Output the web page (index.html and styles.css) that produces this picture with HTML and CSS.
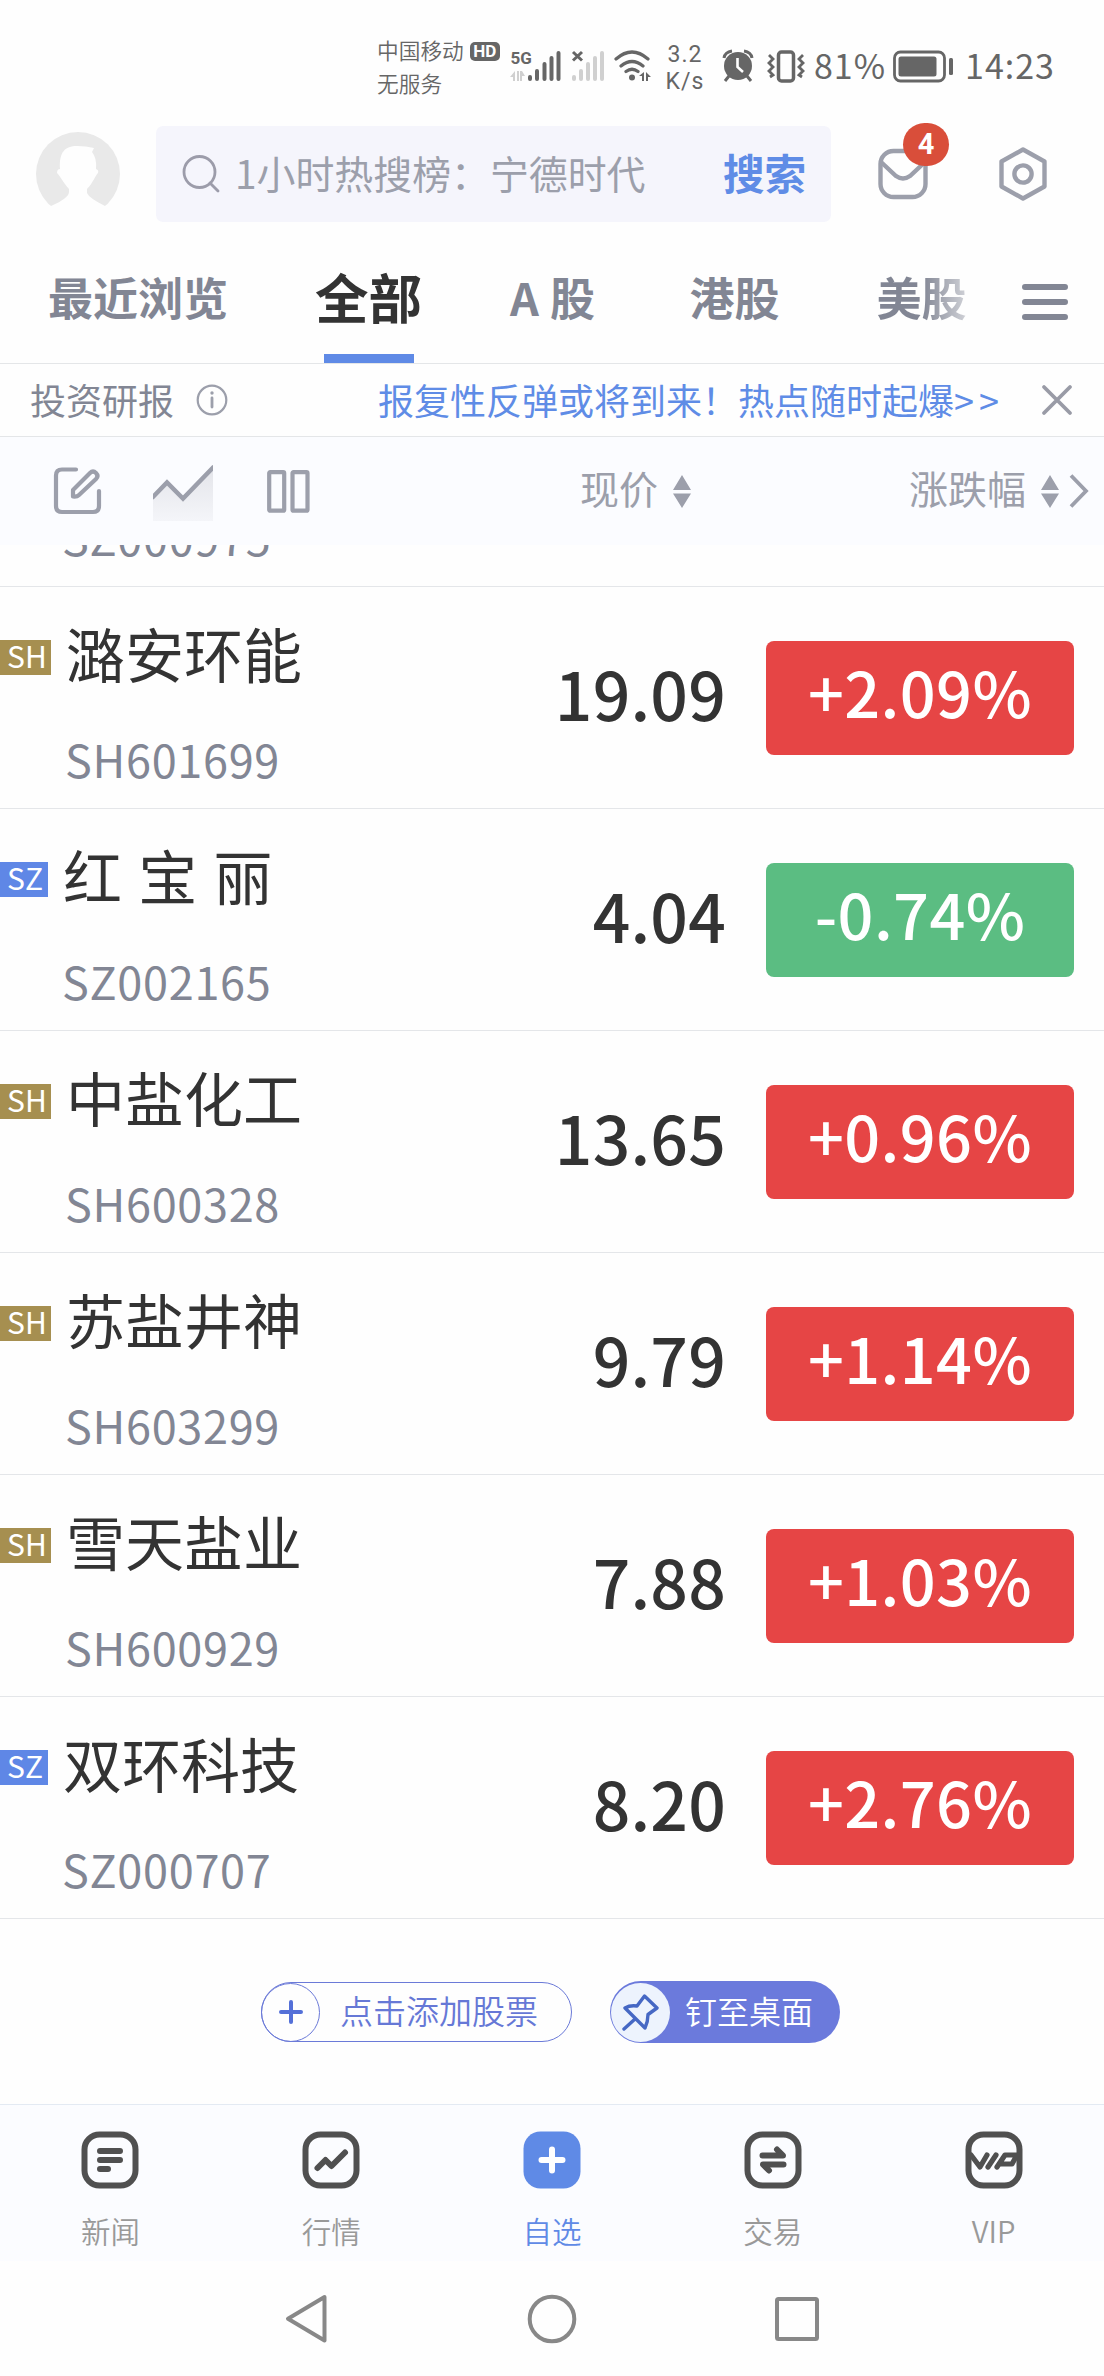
FILE: index.html
```html
<!DOCTYPE html>
<html lang="zh-CN">
<head>
<meta charset="utf-8">
<title>自选</title>
<link rel="stylesheet" href="styles.css">
</head>
<body>
<div class="app">
  <div class="status">
    <div class="carrier"><div class="carrier-line"><span>中国移动</span><span class="hd">HD</span></div><div>无服务</div></div>
    <svg class="signal" width="96" height="34" viewBox="510 49 96 34">
      <text x="510.500" y="64" class="net">5G</text>
      <path d="M515 71v10h-2v-4h-3zM517 71h2v10h-2zM520 71h2l3 5h-3v5h-2z" fill="#d0d0d0"/>
      <g stroke="#666" stroke-width="4" stroke-linecap="round"><path d="M530 77v2M537 71v8M544.500 64v15M551.500 58v21M558.500 53v26"/></g>
      <g stroke="#d0d0d0" stroke-width="4" stroke-linecap="round"><path d="M574 77v2M581 71v8M588 64v15M595 58v21M602 53v26"/></g>
      <path d="M573 52l9 8.500M582 52l-9 8.500" stroke="#666" stroke-width="3"/>
    </svg>
    <svg class="wifi" width="38" height="34" viewBox="614 49 38 34">
      <g fill="none" stroke="#666" stroke-width="3.200" stroke-linecap="round"><path d="M616 59q16-14 32 0M621 66q11-9 22 0M626 71.500q6-4.500 12 0"/></g>
      <circle cx="632" cy="77.500" r="3" fill="#666"/>
      <path d="M639 76l5-4v9h-2v-5zM646 81v-9l5 5h-3v4z" fill="#666"/>
    </svg>
    <div class="speed"><span>3.2</span><span>K/s</span></div>
    <svg class="alarm" width="32" height="34" viewBox="722 49 32 34">
      <circle cx="738" cy="66" r="14" fill="#666"/>
      <path d="M724 58q1-6 8-7M752 58q-1-6-8-7" fill="none" stroke="#666" stroke-width="3"/>
      <path d="M729 76l-4 5M747 76l4 5" stroke="#666" stroke-width="3"/>
      <path d="M737.500 58v9l5.500 5" fill="none" stroke="#fff" stroke-width="2.600"/>
    </svg>
    <svg class="vibrate" width="40" height="34" viewBox="765 49 40 34">
      <rect x="777.500" y="52" width="15" height="29" rx="3" fill="none" stroke="#666" stroke-width="3.500"/>
      <path d="M768 55l4 4-4 4 4 4-4 4 4 4-3 2M802 55l-4 4 4 4-4 4 4 4-4 4 3 2" fill="none" stroke="#666" stroke-width="2.800"/>
    </svg>
    <span class="stat-num">81%</span>
    <svg class="battery" width="62" height="34" viewBox="890 49 62 34">
      <rect x="892.500" y="52" width="50" height="29" rx="6" fill="none" stroke="#666" stroke-width="2.800"/>
      <rect x="896.500" y="56.500" width="38" height="20" rx="2.500" fill="#666"/>
      <rect x="947" y="58" width="4" height="17" rx="1.500" fill="#666"/>
    </svg>
    <span class="stat-num">14:23</span>
  </div>

  <header class="top">
    <svg class="avatar" width="84" height="84" viewBox="0 0 84 84">
      <circle cx="42" cy="42" r="42" fill="#e9e9e9"/>
      <path d="M15 74Q33 66 33 60V57C27 50 24 44 21 41Q21 37 24 37C23 20 29 14 41 14Q50 14 58 16L56 20Q61 26 60 37Q63 38 62 41C59 44 57 51 51 57V61Q53 66 69 74L74 84H10Z" fill="#fefefe"/>
    </svg>
    <div class="search">
      <svg width="38" height="38" viewBox="182 154 38 38" fill="none" stroke="#9c9caa" stroke-width="2.800" stroke-linecap="round"><circle cx="199.500" cy="171" r="15.500"/><path d="M210 182l8 8"/></svg>
      <span class="hint">1小时热搜榜：宁德时代</span>
      <span class="go">搜索</span>
    </div>
    <div class="mail">
      <svg width="50" height="52" viewBox="878 148 50 52" fill="none" stroke="#9c9fab" stroke-width="4.400"><rect x="880.500" y="151" width="45" height="46" rx="13"/><path d="M881 162l15 14q7 5 14 0l15-14"/></svg>
      <span class="badge">4</span>
    </div>
    <svg class="gear" width="50" height="56" viewBox="998 146 50 56" fill="none" stroke="#9c9fab" stroke-width="4.400" stroke-linejoin="round"><path d="M1023 149.500l21.500 12v25l-21.500 12-21.500-12v-25z"/><circle cx="1023" cy="174" r="8.600"/></svg>
  </header>

  <nav class="tabs">
    <span class="tab recent">最近浏览</span>
    <span class="tab active">全部</span>
    <span class="tab a">A 股</span>
    <span class="tab hk">港股</span>
    <span class="tab us">美股</span>
    <svg class="menu" width="46" height="38" viewBox="0 0 46 38" stroke="#828694" stroke-width="6" stroke-linecap="round"><path d="M3 4h40M3 19h40M3 34h40"/></svg>
  </nav>

  <div class="notice">
    <span>投资研报</span>
    <svg class="info" width="32" height="32" viewBox="0 0 32 32"><circle cx="16" cy="16" r="14.300" fill="none" stroke="#9c9fab" stroke-width="2.200"/><circle cx="16" cy="9" r="1.700" fill="#9c9fab"/><path d="M16 14v9" stroke="#9c9fab" stroke-width="2.800" stroke-linecap="round"/></svg>
    <span class="promo">报复性反弹或将到来！热点随时起爆<span class="arrows">&gt;&gt;</span></span>
    <svg class="close" width="32" height="32" viewBox="0 0 32 32" stroke="#999ba6" stroke-width="3.800" stroke-linecap="round"><path d="M3 3l26 26M29 3L3 29"/></svg>
  </div>

  <div class="toolbar">
    <svg class="edit" width="50" height="50" viewBox="53 466 50 50" fill="none" stroke="#9c9fab" stroke-width="4.200" stroke-linecap="round" stroke-linejoin="round"><path d="M76 469.500H62q-6 0-6 6V506q0 6 6 6h31q6 0 6-6V491"/><path d="M73 490l17-17q3-3 6 0t0 6L79 495q-2 2-6 1.500z"/></svg>
    <svg class="chart" width="60" height="56" viewBox="153 465 60 56">
      <defs><linearGradient id="fade" x1="0" y1="0" x2="0" y2="1"><stop offset="0" stop-color="#e4e5ea"/><stop offset="1" stop-color="#f4f5f9"/></linearGradient></defs>
      <path d="M153 497l14-14 16 16 30-31v53h-60z" fill="url(#fade)"/>
      <path d="M152 498l15-15.500 16 16 31-32" fill="none" stroke="#9c9fab" stroke-width="4.400"/>
    </svg>
    <svg class="cols" width="43" height="43" viewBox="0 0 43 43" fill="none" stroke="#9c9fab" stroke-width="4.200"><rect x="2.200" y="2.200" width="15" height="38.500" rx="1"/><rect x="25.500" y="2.200" width="15" height="38.500" rx="1"/></svg>
    <span class="col-price">现价</span>
    <svg class="sort" width="18" height="33" viewBox="0 0 18 33" fill="#9c9fab"><path d="M9 0l9 15H0zM9 33l9-14.500H0z"/></svg>
    <span class="col-change">涨跌幅</span>
    <svg class="sort" width="18" height="33" viewBox="0 0 18 33" fill="#9c9fab"><path d="M9 0l9 15H0zM9 33l9-14.500H0z"/></svg>
    <svg class="chev" width="20" height="34" viewBox="0 0 20 34" fill="none" stroke="#9c9fab" stroke-width="3.800"><path d="M2 1.500L17 17 2 32.500"/></svg>
  </div>

  <main class="list">
    <div class="row cut sz"><div class="code">SZ000975</div></div>
    <div class="row sh"><div class="stock"><div class="title"><span class="tag">SH</span><span class="name">潞安环能</span></div><div class="code">SH601699</div></div><div class="price">19.09</div><div class="pct">+2.09%</div></div>
    <div class="row sz"><div class="stock"><div class="title"><span class="tag">SZ</span><span class="name">红 宝 丽</span></div><div class="code">SZ002165</div></div><div class="price">4.04</div><div class="pct down">-0.74%</div></div>
    <div class="row sh"><div class="stock"><div class="title"><span class="tag">SH</span><span class="name">中盐化工</span></div><div class="code">SH600328</div></div><div class="price">13.65</div><div class="pct">+0.96%</div></div>
    <div class="row sh"><div class="stock"><div class="title"><span class="tag">SH</span><span class="name">苏盐井神</span></div><div class="code">SH603299</div></div><div class="price">9.79</div><div class="pct">+1.14%</div></div>
    <div class="row sh"><div class="stock"><div class="title"><span class="tag">SH</span><span class="name">雪天盐业</span></div><div class="code">SH600929</div></div><div class="price">7.88</div><div class="pct">+1.03%</div></div>
    <div class="row sz"><div class="stock"><div class="title"><span class="tag">SZ</span><span class="name">双环科技</span></div><div class="code">SZ000707</div></div><div class="price">8.20</div><div class="pct">+2.76%</div></div>
  </main>

  <div class="actions">
    <div class="btn add"><span class="knob"><svg width="26" height="26" viewBox="0 0 26 26" stroke="#5470d8" stroke-width="4" stroke-linecap="round"><path d="M13 3v20M3 13h20"/></svg></span><span class="label">点击添加股票</span></div>
    <div class="btn pin"><span class="knob"><svg width="38" height="38" viewBox="622 1993 38 38" fill="none" stroke="#4668c4" stroke-width="3.400" stroke-linejoin="round" stroke-linecap="round"><path d="M644.500 1996l12.500 12-9 6.500q0 7-3 13.500l-20-20q5-3 12-2zM635 2019l-11 10"/></svg></span><span class="label">钉至桌面</span></div>
  </div>

  <nav class="bottom">
    <div class="item"><svg width="58" height="58" viewBox="0 0 58 58" fill="none" stroke="#505050" stroke-width="6" stroke-linecap="round"><rect x="3.500" y="3.500" width="51" height="51" rx="15"/><path d="M19 20h20M19 29h20M19 38h8"/></svg><span>新闻</span></div>
    <div class="item"><svg width="58" height="58" viewBox="0 0 58 58" fill="none" stroke="#505050" stroke-width="6" stroke-linecap="round" stroke-linejoin="round"><rect x="3.500" y="3.500" width="51" height="51" rx="15"/><path d="M15.500 37l8-8 6 6L43 21.500"/></svg><span>行情</span></div>
    <div class="item on"><svg width="58" height="58" viewBox="0 0 58 58"><rect x=".5" y=".5" width="57" height="57" rx="17" fill="#5f8ae6"/><path d="M29 18.500v21M18.500 29h21" stroke="#fff" stroke-width="6" stroke-linecap="round"/></svg><span>自选</span></div>
    <div class="item"><svg width="58" height="58" viewBox="0 0 58 58" fill="none" stroke="#505050" stroke-width="6" stroke-linecap="round" stroke-linejoin="round"><rect x="3.500" y="3.500" width="51" height="51" rx="15"/><path d="M18.500 24.500H39l-6-6M39.500 33.500H19l6 6"/></svg><span>交易</span></div>
    <div class="item"><svg width="58" height="58" viewBox="0 0 58 58" fill="none" stroke="#505050" stroke-width="5.200" stroke-linecap="round" stroke-linejoin="round"><rect x="3.500" y="3.500" width="51" height="51" rx="15" stroke-width="6"/><path d="M6 24l9 12 7-12M31 24l-8 12M32 36l8-12h12l-5 9h-10"/></svg><span>VIP</span></div>
  </nav>

  <div class="system">
    <svg width="44" height="50" viewBox="0 0 44 50"><path d="M39.500 3L3 24.800 39.500 46.500z"/></svg>
    <svg class="home" width="50" height="50" viewBox="0 0 50 50"><circle cx="25" cy="25" r="22.300"/></svg>
    <svg class="recents" width="46" height="46" viewBox="0 0 46 46"><rect x="3" y="3" width="40" height="40" rx="1.500"/></svg>
  </div>
</div>
</body>
</html>
```

FILE: styles.css
```css
* { box-sizing: border-box; }
body { margin: 0; background: #fefefe; font-family: "Noto Sans CJK SC", sans-serif; color: #333; }
svg { display: block; flex: none; }
span { white-space: nowrap; }
.app { width: 1104px; height: 2376px; display: flex; flex-direction: column; overflow: hidden; }

.status { height: 126px; flex: none; display: flex; padding: 33px 0 0 377px; color: #666; }
.carrier { width: 134px; font-size: 21.7px; line-height: 33px; font-weight: 350; }
.carrier-line { display: flex; align-items: center; gap: 6px; }
.hd { width: 30px; height: 19px; margin-top: 3px; border-radius: 5px; background: #666; color: #fff; font: 700 17px/19px Roboto, sans-serif; text-align: center; }
.signal { margin: 16px 0 0 -1px; }
.net { font: 700 17px Roboto, sans-serif; fill: #666; }
.wifi { margin: 16px 0 0 8px; }
.speed { width: 40px; margin: 8px 0 0 13px; display: flex; flex-direction: column; align-items: center; font-family: Roboto, sans-serif; font-size: 23px; line-height: 27px; letter-spacing: 1px; }
.alarm { margin: 16px 0 0 17px; }
.vibrate { margin: 16px 0 0 12px; }
.stat-num { font-size: 34px; line-height: 60px; margin-left: 8px; letter-spacing: 1px; height: 60px; margin-top: 2px; }
.battery { margin: 16px 3px 0 6px; }

.top { height: 96px; flex: none; display: flex; align-items: center; padding-left: 36px; }
.search { width: 675px; height: 96px; margin-left: 36px; padding-left: 26px; border-radius: 7px; background: #f5f5fc; display: flex; align-items: center; }
.hint { margin-left: 15px; font-size: 38.900px; line-height: 50px; padding-bottom: 4px; color: #9c9fab; width: 488px; }
.go { font-size: 41.500px; line-height: 50px; padding-bottom: 4px; font-weight: 700; color: #5f8ce6; }
.mail { position: relative; margin-left: 47px; }
.badge { position: absolute; left: 25px; top: -25px; width: 46px; height: 43px; border-radius: 22px; background: #d94e3a; color: #fff; font: 700 29px/43px Roboto, sans-serif; text-align: center; }
.gear { margin-left: 70px; }

.tabs { height: 142px; flex: none; display: flex; border-bottom: 1px solid #e4e6e8; line-height: 142px; padding: 0 0 0 48px; }
.tab { font-size: 45px; font-weight: 700; color: #828694; height: 141px; padding-top: 4px; }
.active { margin-left: 87px; font-size: 53.500px; color: #333; background: linear-gradient(#5f8ae6, #5f8ae6) 50% 100% / 90px 9px no-repeat; }
.tab.active { padding-top: 3px; }
.a { margin-left: 88px; letter-spacing: .5px; }
.hk { margin-left: 94px; }
.us { margin-left: 97px; background: linear-gradient(90deg, #828694 50%, #e8e9ec 115%); -webkit-background-clip: text; background-clip: text; color: transparent; }
.menu { margin: 61px 0 0 55px; }

.notice { height: 73px; flex: none; display: flex; align-items: center; padding-left: 30px; font-size: 36px; line-height: 60px; color: #828694; border-bottom: 1px solid #e4e6e8; }
.notice > span { padding-bottom: 3px; }
.info { margin-left: 22px; }
.notice .promo { margin-left: 150px; width: 663px; color: #5f8ce6; }
.arrows { letter-spacing: 5px; }

.toolbar { height: 108px; flex: none; display: flex; align-items: center; padding-left: 53px; background: #fbfcff; font-size: 39px; line-height: 60px; color: #9c9fab; }
.toolbar > span { padding-bottom: 8px; }
.chart { margin-left: 50px; margin-top: 4px; }
.cols { margin-left: 54px; }
.col-price { margin-left: 270px; }
.sort { margin-left: 15px; }
.col-change { margin-left: 218px; }
.chev { margin-left: 10px; }

.list { flex: none; }
.row { height: 222px; display: flex; border-bottom: 1px solid #e4e6e9; }
.cut { height: 42px; overflow: hidden; align-items: flex-end; }
.cut .code { padding-bottom: 13px; margin-bottom: 6px; }
.stock { width: 520px; }
.title { display: flex; align-items: center; height: 100px; padding-top: 39px; }
.tag { width: 51px; height: 35px; padding-left: 7px; color: #fff; background: #a68f50; font-size: 30px; line-height: 31px; margin-top: 2px; }
.sz .tag { width: 48px; background: #5f87e6; }
.name { margin-left: 15px; font-size: 59px; line-height: 80px; padding-bottom: 8px; word-spacing: 3px; }
.code { margin: 42px 0 0 65px; font-size: 45px; line-height: 60px; letter-spacing: .7px; color: #828694; }
.sz .code { margin-left: 62px; }
.price { width: 206px; text-align: right; font-size: 66px; line-height: 210px; letter-spacing: .2px; font-weight: 500; }
.pct { width: 308px; height: 114px; margin: 54px 0 0 40px; border-radius: 8px; background: #e64545; color: #fff; text-align: center; font-size: 63px; line-height: 100px; letter-spacing: .4px; font-weight: 500; }
.down { background: #5bbd82; }

.actions { height: 185px; flex: none; display: flex; align-items: center; padding: 1px 0 0 261px; gap: 38px; }
.btn { display: flex; align-items: center; border-radius: 32px; font-size: 33px; font-weight: 350; line-height: 54px; }
.label { padding-bottom: 4px; }
.knob { width: 59px; height: 59px; border-radius: 50%; display: flex; align-items: center; justify-content: center; }
.add { width: 311px; height: 60px; border: 1.500px solid #6b7ad8; color: #6678d6; }
.add .knob { margin: 0 20px 0 -1px; border: 1.500px solid #6b7ad8; }
.pin { width: 230px; height: 62px; padding-left: 1px; background: #6b7adc; color: #fff; font-size: 32px; }
.pin .knob { background: #edf3fd; margin-right: 15px; }

.bottom { height: 157px; flex: none; display: flex; background: #fbfcff; border-top: 1px solid #e3eaf3; }
.item { flex: 1; display: flex; flex-direction: column; align-items: center; padding-top: 26px; font-size: 29.500px; line-height: 40px; gap: 21px; color: #999; font-weight: 350; }
.on { color: #5f8ae6; }

.system { flex: 1; display: flex; align-items: flex-start; padding: 33px 0 0 285px; fill: none; stroke: #888; stroke-width: 4; stroke-linejoin: round; }
.home { margin-left: 198px; }
.recents { margin: 2px 0 0 197px; }
```
